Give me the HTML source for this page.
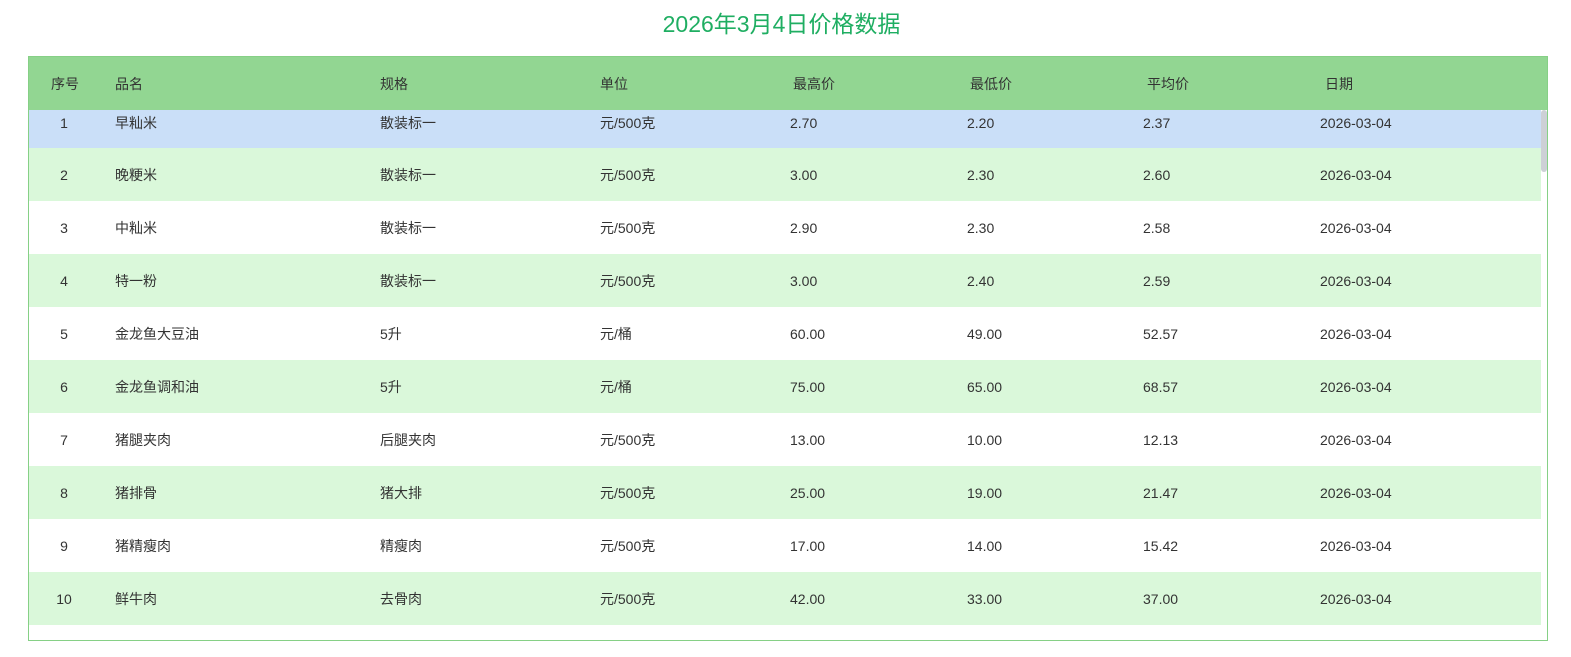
<!DOCTYPE html>
<html><head><meta charset="utf-8"><style>
body{margin:0;width:1571px;height:657px;background:#fff;position:relative;overflow:hidden;font-family:"Liberation Sans","Noto Sans CJK SC",sans-serif;color:#333;}
.title{position:absolute;top:5px;left:0;width:1563px;text-align:center;font-size:23px;color:#1fae62;}
.box{position:absolute;left:28px;top:56px;width:1518px;height:583px;border:1px solid #86d086;overflow:hidden;}
.hd{position:absolute;left:0;top:0;width:1518px;height:53px;background:#92d692;z-index:2;}
.r{position:absolute;left:0;width:1512px;height:53px;}
.t{position:absolute;font-size:14px;line-height:16px;white-space:nowrap;}
.sb{position:absolute;left:1512px;top:53px;width:6px;height:62px;background:#cdd0d6;border-radius:3px;z-index:3;}
</style></head><body>
<div class="title">2026年3月4日价格数据</div>
<div class="box">
<div class="hd">
<span class="t" style="left:22px;top:19px">序号</span>
<span class="t" style="left:86px;top:19px">品名</span>
<span class="t" style="left:351px;top:19px">规格</span>
<span class="t" style="left:571px;top:19px">单位</span>
<span class="t" style="left:764px;top:19px">最高价</span>
<span class="t" style="left:941px;top:19px">最低价</span>
<span class="t" style="left:1118px;top:19px">平均价</span>
<span class="t" style="left:1296px;top:19px">日期</span>
</div>
<div id="rows"></div>
<div class="sb"></div>
</div>
<script>
var d=[["1","早籼米","散装标一","元/500克","2.70","2.20","2.37"],["2","晚粳米","散装标一","元/500克","3.00","2.30","2.60"],["3","中籼米","散装标一","元/500克","2.90","2.30","2.58"],["4","特一粉","散装标一","元/500克","3.00","2.40","2.59"],["5","金龙鱼大豆油","5升","元/桶","60.00","49.00","52.57"],["6","金龙鱼调和油","5升","元/桶","75.00","65.00","68.57"],["7","猪腿夹肉","后腿夹肉","元/500克","13.00","10.00","12.13"],["8","猪排骨","猪大排","元/500克","25.00","19.00","21.47"],["9","猪精瘦肉","精瘦肉","元/500克","17.00","14.00","15.42"],["10","鲜牛肉","去骨肉","元/500克","42.00","33.00","37.00"]];
var h="";
d.forEach(function(r,i){
 var top=38+i*53, bg=i==0?"#cadff8":(i%2?"#daf8da":"#fff");
 h+='<div class="r" style="top:'+top+'px;background:'+bg+'">';
 var xs=[35,86,351,571,761,938,1114,1291];
 var vals=r.concat(["2026-03-04"]);
 vals.forEach(function(v,j){
  var ty=(i==0)?20:19;
  var st=j==0?'left:'+(xs[0]-20)+'px;width:40px;text-align:center':'left:'+xs[j]+'px';
  h+='<span class="t" style="'+st+';top:'+ty+'px">'+v+'</span>';
 });
 h+='</div>';
});
document.getElementById("rows").innerHTML=h;
</script>
</body></html>
